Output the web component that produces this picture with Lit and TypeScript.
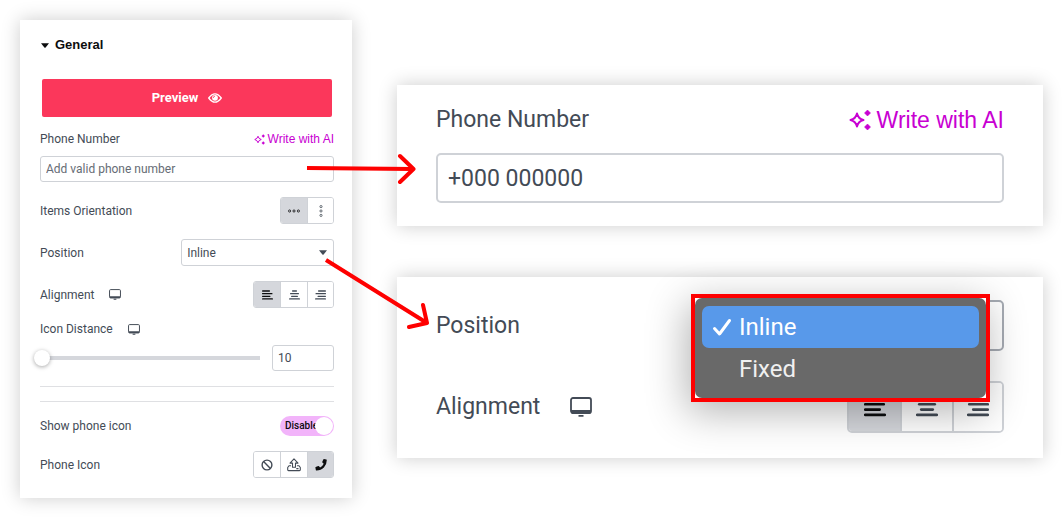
import { LitElement, html, svg, css } from "lit";
import { customElement } from "lit/decorators.js";

const sparkle = html`<svg class="sparkle" viewBox="0 0 22 22" aria-hidden="true">
  <path d="M8 4.500 Q9.200 9.800 14.500 11 Q9.200 12.200 8 17.500 Q6.800 12.200 1.500 11 Q6.800 9.800 8 4.500Z" fill="none" stroke="currentColor" stroke-width="2" stroke-linejoin="round"/>
  <path d="M18.500 1 L21.500 4 L18.500 7 L15.500 4Z M18.500 15 L21.500 18 L18.500 21 L15.500 18Z" fill="currentColor" stroke="currentColor" stroke-width=".6" stroke-linejoin="round"/>
</svg>`;

const monitor = html`<svg class="monitor" viewBox="0 0 22 20" aria-hidden="true">
  <rect x="1" y="1" width="20" height="15" rx="2" fill="none" stroke="currentColor" stroke-width="1.800"/>
  <path d="M1 13h20v2a2 2 0 0 1-2 2H3a2 2 0 0 1-2-2z M8.500 18h5v1.800h-5z" fill="currentColor"/>
</svg>`;

const caret = html`<svg class="caret" viewBox="0 0 8 5" aria-hidden="true"><path d="M0 .3h8L4.600 4.600q-.6.500-1.200 0z" fill="currentColor"/></svg>`;

const alignLines: Record<string, number[][]> = {
  left: [[0, 8], [0, 10.5], [0, 8.5], [0, 11]],
  center: [[3, 8], [1, 10], [2, 9], [0, 11]],
  right: [[3, 11], [0.5, 11], [2.5, 11], [0, 11]],
};

const alignIcon = (kind: string) => html`<svg class="align" viewBox="0 0 11 10" aria-hidden="true">
  ${alignLines[kind].map(
    ([a, b], i) => svg`<line x1=${a + 0.6} x2=${b - 0.6} y1=${1 + i * 2.65} y2=${1 + i * 2.65} stroke="currentColor" stroke-width="1.300" stroke-linecap="round"/>`
  )}
</svg>`;

const dots = (vertical: boolean) => html`<svg class="dots" viewBox="0 0 14 14" aria-hidden="true">
  ${[2.6, 7, 11.4].map(
    (p) => svg`<circle cx=${vertical ? 7 : p} cy=${vertical ? p : 7} r="1.100" fill="none" stroke="currentColor" stroke-width=".8"/>`
  )}
</svg>`;

const alignGroup = () => html`<div class="group" role="group" aria-label="Alignment">
  <button class="seg on" aria-label="Left">${alignIcon("left")}</button>
  <button class="seg" aria-label="Center">${alignIcon("center")}</button>
  <button class="seg" aria-label="Right">${alignIcon("right")}</button>
</div>`;

@customElement("app-root")
export class AppRoot extends LitElement {
  static styles = css`
    :host {
      display: block;
      position: relative;
      background: #fff;
      color: #434b56;
      font: 12px/20px Roboto, "Liberation Sans", sans-serif;
    }
    * { box-sizing: border-box; }
    button, input, select { font: inherit; color: inherit; margin: 0; }
    button { cursor: pointer; }
    svg { display: block; }

    .page {
      display: grid;
      grid-template-columns: minmax(0, 332fr) minmax(0, 646fr);
      column-gap: 45px;
      align-items: start;
      padding: 20px 21px 20px 20px;
    }
    .card { background: #fff; box-shadow: 0 0 18px rgba(0, 0, 0, 0.2); }
    .panel { padding: 15px 18px 20px 20px; }
    .title {
      display: flex;
      align-items: center;
      gap: 6px;
      margin: 0 0 24px;
      padding-left: 1px;
      font: 700 13px/20px "Liberation Sans", Arial, sans-serif;
      color: #0c0d0e;
    }
    .title .caret { width: 8px; }
    .preview {
      display: flex;
      align-items: center;
      justify-content: center;
      gap: 10px;
      height: 38px;
      width: calc(100% - 4px);
      margin: 0 2px 12px;
      border: 0;
      border-radius: 2px;
      background: #fb375b;
      color: #fff;
      font-size: 13px;
      font-weight: 700;
    }
    .eye { width: 14px; height: 10px; }

    .row { display: flex; align-items: center; justify-content: space-between; margin-bottom: 15px; }
    .row:last-child { margin-bottom: 0; }
    .name { display: flex; align-items: center; gap: 15px; }
    .monitor { width: 12px; height: 11px; }
    .head { margin-bottom: 7px; }
    .tight { margin: -4px 0 6px; }
    .ai {
      display: flex;
      align-items: center;
      gap: 3px;
      color: #c800d2;
      font-family: "Liberation Sans", Arial, sans-serif;
      text-decoration: none;
    }
    .sparkle { width: 11px; height: 11px; }
    .text {
      display: block;
      width: 100%;
      height: 26px;
      padding: 0 5px;
      border: 1px solid #cfd2d7;
      border-radius: 3px;
      background: #fff;
      outline: 0;
    }
    .text::placeholder { color: #666c75; opacity: 1; }
    .panel > .text { margin-bottom: 15px; }

    .group { display: flex; border: 1px solid #cfd2d7; border-radius: 3px; overflow: hidden; }
    .seg {
      display: grid;
      place-items: center;
      width: 27px;
      height: 25px;
      padding: 0;
      border: 0;
      border-left: 1px solid #cfd2d7;
      background: #fff;
    }
    .seg:first-child { width: 26px; border-left: 0; }
    .seg:last-child { width: 26px; }
    .on { background: #d5d7dc; color: #0c0d0e; }
    .align { width: 11px; height: 10px; }
    .dots { width: 14px; height: 14px; }
    .glyph { width: 14px; height: 14px; }

    .pick { display: grid; align-items: center; width: 52%; }
    .pick > * { grid-area: 1 / 1; }
    .pick select {
      appearance: none;
      width: 100%;
      height: 27px;
      padding: 0 5px;
      border: 1px solid #cfd2d7;
      border-radius: 3px;
      background: #fff;
    }
    .caret { width: 8px; height: 5px; }
    .pick .caret { justify-self: end; margin-right: 7px; pointer-events: none; }

    .slide { gap: 12px; }
    .range {
      appearance: none;
      flex: 1;
      min-width: 0;
      height: 18px;
      margin-left: -6px;
      background: linear-gradient(#d5d7dc, #d5d7dc) 8px 7px / calc(100% - 8px) 4px no-repeat;
      border-radius: 2px;
    }
    .range::-webkit-slider-thumb {
      appearance: none;
      width: 16px;
      height: 16px;
      border-radius: 50%;
      background: #fff;
      box-shadow: 0 1px 4px rgba(0, 0, 0, 0.35);
    }
    .slide .text { width: 62px; }
    .rule { height: 1px; margin: 0 0 14px; border: 0; background: #dfe0e3; }

    .toggle {
      display: grid;
      align-items: center;
      width: 54px;
      height: 20px;
      border-radius: 10px;
      background: #f2b4fa;
      color: #0c0d0e;
      font-size: 10px;
      font-weight: 500;
      overflow: hidden;
    }
    .toggle > * { grid-area: 1 / 1; }
    .toggle span { padding-left: 5px; }
    .toggle input {
      appearance: none;
      justify-self: end;
      width: 18px;
      height: 18px;
      margin-right: 1px;
      border-radius: 50%;
      background: #fff;
      z-index: 1;
    }

    .zooms { display: grid; row-gap: 51px; padding-top: 65px; }
    .large { font-size: 23px; line-height: 32px; padding: 19px 39px 23px; }
    .large .ai { gap: 6px; }
    .large .head { margin-bottom: 17px; }
    .large .sparkle { width: 22px; height: 22px; }
    .large .text { height: 50px; padding: 0 10px; border-width: 2px; border-radius: 5px; }
    .large .name { gap: 30px; }
    .large .monitor { width: 22px; height: 20px; }
    .menu-card { position: relative; padding: 23px 39px 25px; }
    .menu-card .row { margin-bottom: 0; }
    .menu-card .row + .row { margin-top: 30px; }
    .large .pick select { height: 51px; border: 2px solid #a6abb3; border-radius: 5px; }
    .large .group { border-width: 2px; border-radius: 5px; }
    .large .seg { width: 52px; height: 48px; border-left-width: 2px; }
    .large .seg:first-child { width: 51px; }
    .large .seg:last-child { width: 50px; }
    .large .align { width: 22px; height: 20px; }

    .menu {
      position: absolute;
      top: 17px;
      right: 53px;
      width: 299px;
      border: 4px solid #fe0000;
      background: #fff;
      box-shadow: -4px 10px 40px rgba(0, 0, 0, 0.3);
    }
    .list {
      margin: 0;
      padding: 8px 7px;
      list-style: none;
      border-radius: 7px;
      background: #696969;
      color: #f0f0f0;
      font-size: 24px;
    }
    .option {
      display: grid;
      grid-template-columns: 20px 1fr;
      gap: 7px;
      align-items: center;
      height: 42px;
      padding-left: 10px;
      border-radius: 7px;
    }
    .chosen { background: #5899ea; color: #fff; }
    .option span { grid-column: 2; }
    .tick { width: 20px; height: 20px; }

    .arrows { position: absolute; left: 0; top: 0; width: 1064px; height: 518px; pointer-events: none; }
  `;

  render() {
    return html`
      <main class="page">
        <section class="card panel">
          <h2 class="title">${caret}General</h2>
          <button class="preview">
            Preview
            <svg class="eye" viewBox="0 0 14 10" aria-hidden="true">
              <path d="M.7 5Q7-3.400 13.300 5Q7 13.400.7 5Z" fill="none" stroke="#fff" stroke-width="1.300" stroke-linejoin="round"/>
              <circle cx="7" cy="4.800" r="2.900" fill="#fff"/>
              <path d="M5.400 4.800Q5.400 3.300 6.900 3.200" fill="none" stroke="#fb375b" stroke-width=".9"/>
            </svg>
          </button>
          <div class="row head">
            <label for="phone">Phone Number</label>
            <a class="ai" href="#">${sparkle}Write with AI</a>
          </div>
          <input class="text" id="phone" type="text" placeholder="Add valid phone number" />
          <div class="row">
            <span>Items Orientation</span>
            <div class="group" role="group" aria-label="Items Orientation">
              <button class="seg on" aria-label="Horizontal">${dots(false)}</button>
              <button class="seg" aria-label="Vertical">${dots(true)}</button>
            </div>
          </div>
          <div class="row">
            <label for="position">Position</label>
            <div class="pick">
              <select id="position"><option selected>Inline</option><option>Fixed</option></select>
              ${caret}
            </div>
          </div>
          <div class="row">
            <span class="name">Alignment ${monitor}</span>
            ${alignGroup()}
          </div>
          <div class="row tight">
            <label class="name" for="distance">Icon Distance ${monitor}</label>
          </div>
          <div class="row slide">
            <input class="range" type="range" min="10" max="100" value="10" aria-label="Icon Distance" />
            <input class="text" id="distance" type="text" inputmode="numeric" .value=${"10"} />
          </div>
          <hr class="rule" />
          <hr class="rule" />
          <div class="row">
            <label for="show">Show phone icon</label>
            <label class="toggle"><span>Disable</span><input id="show" type="checkbox" checked /></label>
          </div>
          <div class="row">
            <span>Phone Icon</span>
            <div class="group" role="group" aria-label="Phone Icon">
              <button class="seg" aria-label="None">
                <svg class="glyph" viewBox="0 0 14 14"><g fill="none" stroke="currentColor" stroke-width="1.400"><circle cx="7" cy="7" r="4.900"/><path d="M3.600 3.600l6.800 6.800"/></g></svg>
              </button>
              <button class="seg" aria-label="Upload">
                <svg class="glyph" viewBox="0 0 14 14"><g fill="none" stroke="currentColor" stroke-width="1.100" stroke-linejoin="round"><path d="M7 .9L11 5.100H8.500V9.200h-3V5.100H3z"/><path d="M4 7.700H2L.7 9.500v2.300q0 .8.8.8h11q.8 0 .8-.8V9.500L12 7.700h-2"/><path d="M9.300 10.600h2.200"/></g></svg>
              </button>
              <button class="seg on" aria-label="Phone">
                <svg class="glyph" viewBox="0 0 14 14"><path d="M12.300 1.500L9.900 1q-.4 0-.6.400L8.200 3.900q-.1.400.2.700l1.300 1.100Q8.600 8.200 6.100 9.500L5 8.200q-.3-.3-.7-.2L1.700 9.100q-.4.200-.3.700l.5 2.400q.1.400.6.400Q7 12.600 9.900 9.600 12.800 6.700 12.800 2.100q0-.5-.5-.6z" fill="currentColor"/></svg>
              </button>
            </div>
          </div>
        </section>

        <div class="zooms">
          <section class="card large">
            <div class="row head">
              <label for="phone-large">Phone Number</label>
              <a class="ai" href="#">${sparkle}Write with AI</a>
            </div>
            <input class="text" id="phone-large" type="text" .value=${"+000 000000"} />
          </section>
          <section class="card large menu-card">
            <div class="row">
              <label for="position-large">Position</label>
              <div class="pick">
                <select id="position-large"><option selected>Inline</option><option>Fixed</option></select>
              </div>
            </div>
            <div class="row">
              <span class="name">Alignment ${monitor}</span>
              ${alignGroup()}
            </div>
            <div class="menu">
              <ul class="list" role="listbox" aria-label="Position">
                <li class="option chosen" role="option" aria-selected="true">
                  <svg class="tick" viewBox="0 0 20 20" aria-hidden="true"><path d="M2.500 11.500L7.500 17L17.500 3.500" fill="none" stroke="#fff" stroke-width="3" stroke-linecap="round" stroke-linejoin="round"/></svg>
                  <span>Inline</span>
                </li>
                <li class="option" role="option" aria-selected="false"><span>Fixed</span></li>
              </ul>
            </div>
          </section>
        </div>
      </main>
      <svg class="arrows" viewBox="0 0 1064 518" aria-hidden="true">
        <g fill="none" stroke="#fe0000" stroke-width="4" stroke-linejoin="round">
          <path d="M307 168L413 169M326 260L427 323"/>
          <path d="M400 156L413.500 169L400 182M423 305L427 323L409 327" stroke-linecap="round"/>
        </g>
      </svg>
    `;
  }
}
